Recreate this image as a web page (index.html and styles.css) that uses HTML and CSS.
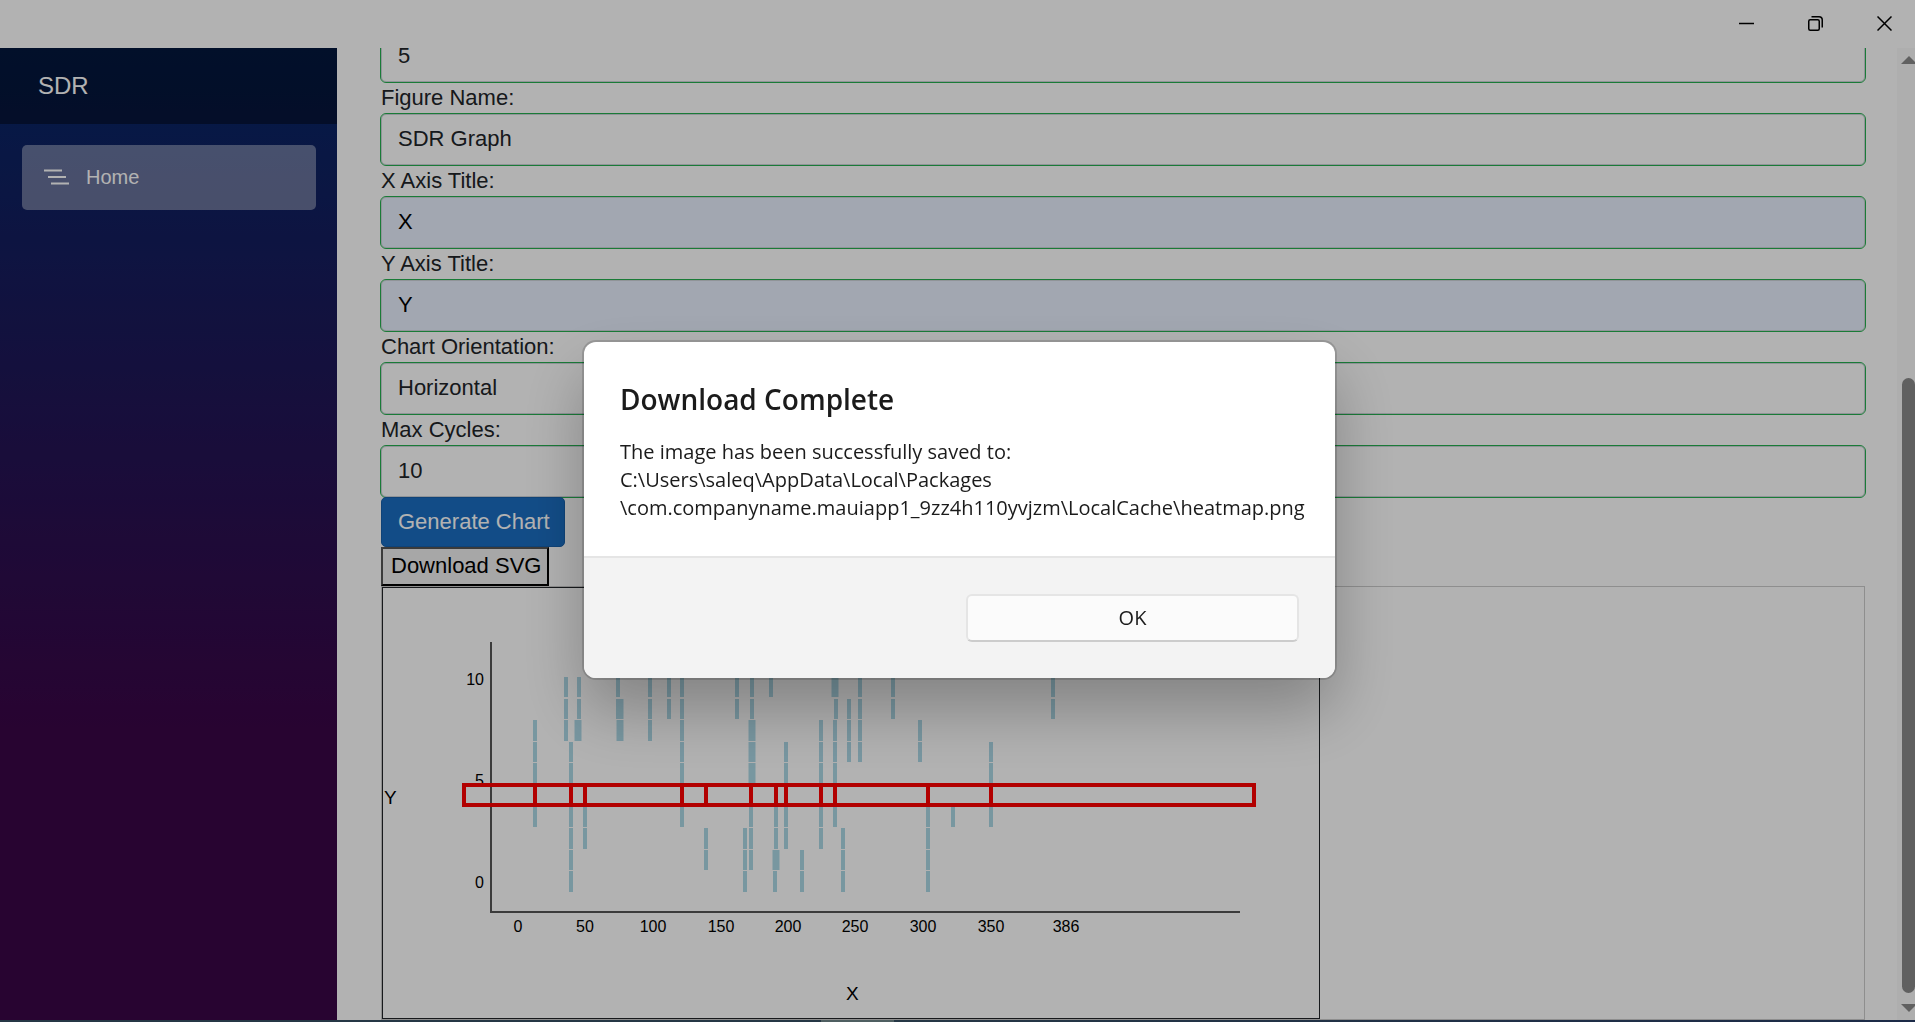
FILE: index.html
```html
<!DOCTYPE html>
<html lang="en">
<head>
<meta charset="utf-8">
<title>SDR</title>
<link rel="stylesheet" href="styles.css">
</head>
<body>
<div class="window">
  <header class="titlebar">
    <button class="caption" type="button" aria-label="Minimize">
      <svg width="15" height="15" viewBox="0 0 15 15"><path d="M0 7.5H15" /></svg>
    </button>
    <button class="caption" type="button" aria-label="Restore">
      <svg width="15" height="15" viewBox="0 0 15 15"><rect x=".75" y="3.75" width="10.5" height="10.5" rx="1.5" /><path d="M3.5 .75H11A3.25 3.25 0 0 1 14.25 4V11.5" /></svg>
    </button>
    <button class="caption" type="button" aria-label="Close">
      <svg width="15" height="15" viewBox="0 0 15 15"><path d="M.5 .5L14.5 14.5M14.5 .5L.5 14.5" /></svg>
    </button>
  </header>

  <div class="page">
    <aside class="sidebar">
      <div class="brand-row"><a class="brand" href="#">SDR</a></div>
      <nav class="nav">
        <a class="nav-link" href="#">
          <svg width="26" height="16" viewBox="0 0 26 16"><path d="M0 1.5H18M4 8H22M7 14.5H25" /></svg>
          Home
        </a>
      </nav>
    </aside>

    <main class="content">
      <form class="form">
        <input class="field" id="threshold" type="text" value="5" aria-label="Selected cycle">
        <label class="label" for="figure">Figure Name:</label>
        <input class="field" id="figure" type="text" value="SDR Graph">
        <label class="label" for="xaxis">X Axis Title:</label>
        <input class="field filled" id="xaxis" type="text" value="X">
        <label class="label" for="yaxis">Y Axis Title:</label>
        <input class="field filled" id="yaxis" type="text" value="Y">
        <label class="label" for="orientation">Chart Orientation:</label>
        <select class="field" id="orientation"><option>Horizontal</option><option>Vertical</option></select>
        <label class="label" for="cycles">Max Cycles:</label>
        <input class="field" id="cycles" type="text" value="10">
        <button class="generate" type="button">Generate Chart</button>
        <button class="download" type="button">Download SVG</button>
      </form>
      <div class="chart-frame">
        <svg class="chart" width="936" height="430" viewBox="0 0 936 430">
          <clipPath id="rows">
            <path d="M0 89H936V109H0ZM0 111H936V131H0ZM0 132H936V153H0ZM0 154H936V174H0ZM0 175H936V196H0ZM0 197H936V218H0ZM0 219H936V239H0ZM0 240H936V261H0ZM0 262H936V282H0ZM0 283H936V304H0Z" />
          </clipPath>
          <g class="ticks end">
            <text x="101" y="97">10</text>
            <text x="101" y="198">5</text>
            <text x="101" y="300">0</text>
          </g>
          <g class="ticks">
            <text x="135" y="344">0</text>
            <text x="202" y="344">50</text>
            <text x="270" y="344">100</text>
            <text x="338" y="344">150</text>
            <text x="405" y="344">200</text>
            <text x="472" y="344">250</text>
            <text x="540" y="344">300</text>
            <text x="608" y="344">350</text>
            <text x="683" y="344">386</text>
          </g>
          <text class="axis-title" x="1" y="216">Y</text>
          <text class="axis-title" x="463" y="412">X</text>
          <g clip-path="url(#rows)">
            <path class="cells" d="M152 132V239M183 89V153M188 154V304M196 89V131M202 197V261M235 89V131M267 89V153M286 89V131M299 89V239M323 240V282M354 89V131M362 240V304M369 89V131M368 197V282M388 89V109M393 197V261M392 283V304M403 154V261M419 262V304M438 132V261M453 111V131M452 132V239M460 240V304M466 111V174M477 89V174M510 89V131M537 132V174M545 197V304M570 219V239M608 154V239M670 89V131" />
            <path class="cells wide" d="M195 132V153M237 111V153M369 132V196M393 262V282M452 89V109" />
          </g>
          <path class="axis" d="M108 54V324H857" />
          <rect class="selected" x="81" y="197" width="790" height="20" />
          <path class="selected" d="M152 197V217M188 197V217M202 197V217M299 197V217M323 197V217M368 197V217M393 197V217M403 197V217M438 197V217M452 197V217M545 197V217M608 197V217" />
        </svg>
      </div>
    </main>

    <div class="scrollbar">
      <svg width="16" height="8" viewBox="0 0 16 8"><path d="M8 0L16 8H0Z" /></svg>
      <div class="track"><div class="thumb"></div></div>
      <svg width="16" height="8" viewBox="0 0 16 8"><path d="M0 0H16L8 8Z" /></svg>
    </div>
  </div>
  <div class="taskbar"></div>
</div>

<div class="overlay">
  <section class="dialog" role="dialog" aria-labelledby="dialog-title">
    <div class="dialog-body">
      <h1 class="dialog-title" id="dialog-title">Download Complete</h1>
      <p class="dialog-text">The image has been successfully saved to:<br>C:\Users\saleq\AppData\Local\Packages<br>\com.companyname.mauiapp1_9zz4h110yvjzm\LocalCache\heatmap.png</p>
    </div>
    <div class="dialog-actions"><button class="ok" type="button">OK</button></div>
  </section>
</div>
</body>
</html>
```
FILE: styles.css
```css
* { box-sizing: border-box; }

body {
  margin: 0;
  font: 22px/32px "Liberation Sans", Arial, sans-serif;
  color: #212529;
  background: #fff;
}

button, input, select { font: inherit; color: inherit; margin: 0; }

.window {
  display: grid;
  grid-template-rows: 48px minmax(0, 1fr) 2px;
  height: 100vh;
}

.titlebar {
  display: flex;
  justify-content: flex-end;
  gap: 8px;
}
.caption {
  display: flex;
  align-items: center;
  justify-content: center;
  width: 61px;
  padding: 0 0 2px;
  border: 0;
  background: none;
}
.caption svg { fill: none; stroke: #000; stroke-width: 1.5; }

.page { display: flex; min-height: 0; }

.sidebar {
  flex: 0 0 337px;
  background: linear-gradient(180deg, rgb(5, 39, 103) 0%, #3a0647 70%);
}
.brand-row {
  display: flex;
  align-items: center;
  height: 76px;
  padding-left: 38px;
  background: rgba(0, 0, 0, .4);
}
.brand { color: #fff; font-size: 24px; text-decoration: none; }
.nav { padding: 21px 21px 21px 22px; }
.nav-link {
  display: flex;
  align-items: center;
  gap: 16px;
  height: 65px;
  padding: 0 22px 2px;
  border-radius: 5px;
  background: rgba(255, 255, 255, .37);
  color: #fff;
  font-size: 20px;
  text-decoration: none;
}
.nav-link svg { fill: none; stroke: #fff; stroke-width: 2; }

.content {
  flex: 1;
  display: flex;
  flex-direction: column;
  justify-content: flex-end;
  min-width: 0;
  padding: 0 32px 0 44px;
  overflow: hidden;
}
.form {
  display: flex;
  flex-direction: column;
  align-items: flex-start;
}
.field {
  width: 100%;
  height: 51px;
  padding: 0 16px 2px;
  border: 1px solid #ced4da;
  border-radius: 5px;
  outline: 1px solid #26b050;
  background: #fff;
  appearance: none;
}
.field.filled { background: #e8f0fe; color: #000; }
.generate {
  height: 50px;
  padding: 0 14px 0 16px;
  border: 1px solid #1861ac;
  border-radius: 5px;
  background: #1b6ec2;
  color: #fff;
}
.download {
  height: 39px;
  padding: 0 6px 2px 8px;
  border: 2px solid;
  border-color: #555 #000 #000 #555;
  background: #efefef;
  color: #000;
  line-height: 24px;
}
.chart-frame { border: 1px solid #ccc; }
.chart {
  display: block;
  box-sizing: content-box;
  border: 1px solid #212529;
}
.ticks { font-size: 16px; text-anchor: middle; fill: #000; }
.ticks.end { text-anchor: end; }
.axis-title { font-size: 19px; fill: #000; }
.axis { fill: none; stroke: #555; stroke-width: 2; }
.cells { stroke: #add8e6; stroke-width: 4; }
.cells.wide { stroke-width: 7; }
.selected { fill: none; stroke: #f00; stroke-width: 4; }

.scrollbar {
  flex: 0 0 18px;
  display: flex;
  flex-direction: column;
  gap: 11px;
  padding: 8px 0 8px 4px;
  overflow: hidden;
  background: #fafafa;
}
.scrollbar svg { flex: none; fill: #8a8a8a; }
.track {
  flex: 1;
  display: flex;
  align-items: flex-end;
  padding-left: 1px;
}
.thumb {
  width: 100%;
  height: 67%;
  border-radius: 7px;
  background: #8a8a8a;
}

.taskbar {
  background: linear-gradient(90deg, #364f64 0 821px, #72888c 821px 894px, #364f64 894px, #283d66);
}

.overlay {
  position: fixed;
  inset: 0;
  display: flex;
  align-items: center;
  justify-content: center;
  padding: 0 0 2px 4px;
  background: rgba(0, 0, 0, .3);
}
.dialog {
  width: 751px;
  border-radius: 12px;
  background: #fff;
  box-shadow: 0 0 0 2px rgba(0, 0, 0, .15), 0 32px 64px rgba(0, 0, 0, .27);
  color: #1b1b1b;
  font-family: "Open Sans", "Noto Sans", sans-serif;
  overflow: hidden;
}
.dialog-body { padding: 36px 36px 34px; border-bottom: 2px solid #e5e5e5; }
.dialog-title { margin: 0 0 18px; font-size: 28px; line-height: 42px; font-weight: 600; }
.dialog-text { margin: 0; font-size: 20px; line-height: 28px; white-space: nowrap; }
.dialog-actions {
  display: flex;
  justify-content: flex-end;
  padding: 36px;
  background: #f3f3f3;
}
.ok {
  width: 333px;
  height: 48px;
  border: 2px solid #e5e5e5;
  border-bottom-color: #ccc;
  border-radius: 6px;
  background: #fbfbfb;
  font-size: 20px;
}
```
